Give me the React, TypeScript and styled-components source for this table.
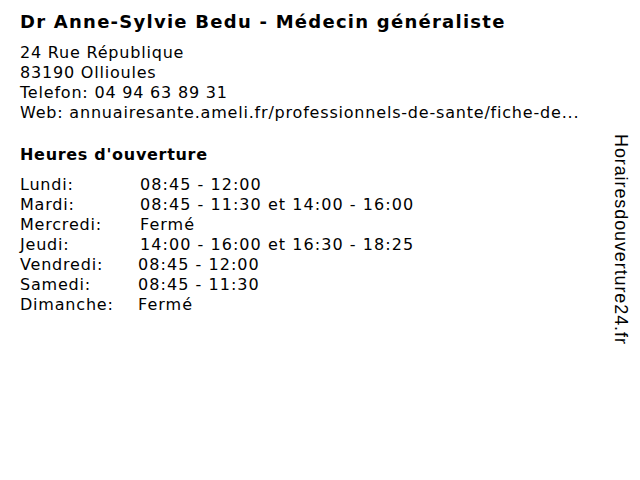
import styled, { createGlobalStyle } from 'styled-components';

const GlobalStyle = createGlobalStyle`
  body {
    margin: 0;
    background: #ffffff;
    color: #000000;
    font-family: "DejaVu Sans", Verdana, sans-serif;
  }
`;

const Page = styled.div`
  display: flex;
  width: 640px;
  height: 480px;
  overflow: hidden;
`;

const Main = styled.div`
  flex: 1;
  padding: 9px 0 0 20px;
`;

const Title = styled.h1`
  margin: 0 0 8px;
  font-size: 18px;
  font-weight: bold;
  line-height: 26px;
  letter-spacing: 1.25px;
  white-space: nowrap;
`;

const Line = styled.div`
  font-size: 16px;
  line-height: 20px;
  letter-spacing: 0.8px;
  white-space: nowrap;
`;

const SectionTitle = styled.h2`
  margin: 22px 0 10px;
  font-size: 16px;
  font-weight: bold;
  line-height: 20px;
  letter-spacing: 0.7px;
`;

const HoursRow = styled.div`
  display: flex;
  font-size: 16px;
  line-height: 20px;
  letter-spacing: 0.8px;
`;

const Day = styled.span<{ $width: number }>`
  width: ${(p) => p.$width}px;
  flex-shrink: 0;
`;

const Time = styled.span`
  letter-spacing: 1.05px;
  white-space: nowrap;
`;

const Side = styled.aside`
  width: 40px;
  padding-top: 134px;
`;

const SideText = styled.div`
  writing-mode: vertical-rl;
  font-family: "Liberation Sans", Arial, sans-serif;
  font-size: 18px;
  line-height: 20px;
  letter-spacing: 0.9px;
  margin-left: 11px;
`;

const hours = [
  { day: 'Lundi:', time: '08:45 - 12:00', w: 120 },
  { day: 'Mardi:', time: '08:45 - 11:30 et 14:00 - 16:00', w: 120 },
  { day: 'Mercredi:', time: 'Fermé', w: 120 },
  { day: 'Jeudi:', time: '14:00 - 16:00 et 16:30 - 18:25', w: 120 },
  { day: 'Vendredi:', time: '08:45 - 12:00', w: 118 },
  { day: 'Samedi:', time: '08:45 - 11:30', w: 118 },
  { day: 'Dimanche:', time: 'Fermé', w: 118 },
];

export default function App() {
  return (
    <Page>
      <GlobalStyle />
      <Main>
        <Title>Dr Anne-Sylvie Bedu - Médecin généraliste</Title>
        <Line>24 Rue République</Line>
        <Line>83190 Ollioules</Line>
        <Line>Telefon: 04 94 63 89 31</Line>
        <Line>Web: annuairesante.ameli.fr/professionnels-de-sante/fiche-de...</Line>
        <SectionTitle>Heures d'ouverture</SectionTitle>
        {hours.map((h) => (
          <HoursRow key={h.day}>
            <Day $width={h.w}>{h.day}</Day>
            <Time>{h.time}</Time>
          </HoursRow>
        ))}
      </Main>
      <Side>
        <SideText>Horairesdouverture24.fr</SideText>
      </Side>
    </Page>
  );
}
